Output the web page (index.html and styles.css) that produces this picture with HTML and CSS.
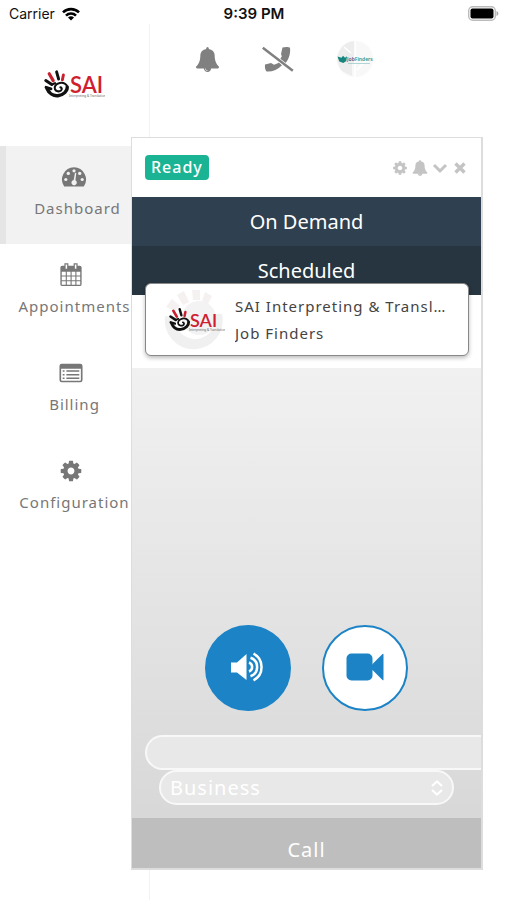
FILE: index.html
```html
<!DOCTYPE html>
<html lang="en">
<head>
<meta charset="utf-8">
<meta name="viewport" content="width=device-width, initial-scale=1">
<title>SAI Dashboard</title>
<link rel="stylesheet" href="styles.css">
</head>
<body>
<svg class="defs" aria-hidden="true">
  <symbol id="bell" viewBox="0 0 1792 1792"><path d="M912 1696q0-16-16-16-59 0-101.500-42.500t-42.500-101.500q0-16-16-16t-16 16q0 73 51.500 124.500t124.500 51.500q16 0 16-16zm816-288q0 52-38 90t-90 38h-448q0 106-75 181t-181 75-181-75-75-181h-448q-52 0-90-38t-38-90q50-42 91-88t85-119.500 74.500-158.500 50-206 19.500-260q0-152 117-282.500t307-158.500q-8-19-8-39 0-40 28-68t68-28 68 28 28 68q0 20-8 39 190 28 307 158.500t117 282.500q0 139 19.500 260t50 206 74.500 158.500 85 119.500 91 88z"/></symbol>
  <symbol id="cog" viewBox="0 0 1792 1792"><path d="M1152 896q0-106-75-181t-181-75-181 75-75 181 75 181 181 75 181-75 75-181zm512-109v222q0 12-8 23t-20 13l-185 28q-19 54-39 91 35 50 107 138 10 12 10 25t-9 23q-27 37-99 108t-94 71q-12 0-26-9l-138-108q-44 23-91 38-16 136-29 186-7 28-36 28h-222q-14 0-24.500-8.500t-11.500-21.500l-28-184q-49-16-90-37l-141 107q-10 9-25 9-14 0-25-11-126-114-165-168-7-10-7-23 0-12 8-23 15-21 51-66.500t54-70.500q-27-50-41-99l-183-27q-13-2-21-12.500t-8-23.500v-222q0-12 8-23t19-13l186-28q14-46 39-92-40-57-107-138-10-12-10-24 0-10 9-23 26-36 98.500-107.500t94.500-71.500q13 0 26 10l138 107q44-23 91-38 16-136 29-186 7-28 36-28h222q14 0 24.500 8.500t11.500 21.500l28 184q49 16 90 37l142-107q9-9 24-9 13 0 25 10 129 119 165 170 7 8 7 22 0 12-8 23-15 21-51 66.500t-54 70.500q26 50 41 98l183 28q13 2 21 12.500t8 23.500z"/></symbol>
  <symbol id="hand" viewBox="0 0 26 28">
    <g fill="none" stroke-linecap="round">
      <path d="M1.800 10.500l6 4" stroke="#111" stroke-width="3"/>
      <path d="M5.200 3.800l4 6.800" stroke="#c8202f" stroke-width="3.200"/>
      <path d="M12.600 1.800l2 7.200" stroke="#111" stroke-width="2.900"/>
      <path d="M19.400 5l-1 4.800" stroke="#c8202f" stroke-width="2.900"/>
      <path d="M2 17.300l5 1.500" stroke="#111" stroke-width="2.800"/>
      <path d="M3 18.500c2 5 6.500 7.700 11 7.200 5.500-.6 9.500-4.700 9.200-8.700" stroke="#111" stroke-width="3.400"/>
      <path d="M23.200 17c-.3-3-3.700-4.800-7.400-4-4 .9-5.800 3.500-4.800 6.200 1 2.200 4 2.800 6 1.300 1.300-1.200.8-3-.6-3.100" stroke="#111" stroke-width="2.100"/>
      <path d="M8 14.500l3-1.300" stroke="#111" stroke-width="2.200"/>
    </g>
  </symbol>
</svg>

<header class="status">
  <div class="carrier">Carrier
    <svg class="wifi" viewBox="0 0 18 14" aria-hidden="true"><g fill="none" stroke="#000" stroke-width="2.600"><path d="M1 5.400a11.300 11.300 0 0 1 16 0M4 8.600a7 7 0 0 1 10 0"/></g><path d="M9 13.500L6 10.600a4.300 4.300 0 0 1 6 0z"/></svg>
  </div>
  <div class="clock">9:39 PM</div>
  <svg class="battery" viewBox="0 0 31 15" aria-hidden="true"><rect x=".7" y=".7" width="26.600" height="13.600" rx="4" fill="#fff" stroke="#bbb" stroke-width="1.400"/><rect x="2.500" y="2.500" width="23" height="10" rx="2"/><path d="M28.500 5c2.500.8 2.500 4.200 0 5z" fill="#aaa"/></svg>
</header>

<div class="app">
  <aside class="sidebar">
    <a class="brand" href="#" aria-label="SAI">
      <svg viewBox="0 0 61 29"><use href="#hand" width="26" height="28"/><text x="26" y="23" class="logo-word">SAI</text><text x="25" y="27" class="logo-tag">Interpreting &amp; Translation</text></svg>
    </a>
    <nav>
      <a class="nav-item active" href="#">
        <svg viewBox="0 0 26 26" aria-hidden="true"><path d="M3.200 22.500A12.300 12.300 0 0 1 13 3.200a12.300 12.300 0 0 1 9.800 19.300z"/><g fill="#f2f2f2"><circle cx="4.800" cy="15.500" r="1.600"/><circle cx="7.300" cy="9.400" r="1.700"/><circle cx="13" cy="6.800" r="1.600"/><circle cx="18.700" cy="9.400" r="1.700"/><circle cx="21.200" cy="15.500" r="1.600"/><path d="M14 8.800l1.300.3-.9 7.200a2.700 2.700 0 1 1-1.700-.3z"/></g></svg>
        <span>Dashboard</span>
      </a>
      <a class="nav-item" href="#">
        <svg viewBox="0 0 26 26" aria-hidden="true"><path d="M3.500 3h19a2 2 0 0 1 2 2v18a2 2 0 0 1-2 2h-19a2 2 0 0 1-2-2V5a2 2 0 0 1 2-2z"/><path d="M6.500 1h3v6h-3zM16.500 1h3v6h-3z" fill="#fff" stroke="#777" stroke-width="1.300"/><path d="M3 9.500h4.300v4H3zM8.500 9.500h4v4h-4zM13.700 9.500h4v4h-4zM18.900 9.500H23v4h-4.100zM3 14.700h4.300v4H3zM8.500 14.700h4v4h-4zM13.700 14.700h4v4h-4zM18.900 14.700H23v4h-4.100zM3 19.900h4.300v3.600H3zM8.500 19.900h4v3.600h-4zM13.700 19.900h4v3.600h-4zM18.900 19.900H23v3.600h-4.100z" fill="#fff"/></svg>
        <span>Appointments</span>
      </a>
      <a class="nav-item" href="#">
        <svg viewBox="0 0 26 26" aria-hidden="true"><rect x=".5" y="3" width="25" height="20" rx="2.500"/><path d="M2.300 8.500h21.400v12a.8.800 0 0 1-.8.800H3.100a.8.800 0 0 1-.8-.8z" fill="#fff"/><path d="M4 10h2v1.600H4zM4 14h2v1.600H4zM4 18h2v1.600H4zM8 10h14v1.600H8zM8 14h14v1.600H8zM8 18h14v1.600H8z"/></svg>
        <span>Billing</span>
      </a>
      <a class="nav-item" href="#">
        <svg aria-hidden="true"><use href="#cog"/></svg>
        <span>Configuration</span>
      </a>
    </nav>
  </aside>

  <main class="main">
    <div class="toolbar">
      <button type="button" aria-label="Notifications"><svg class="tool-bell"><use href="#bell"/></svg></button>
      <button type="button" aria-label="Calls off">
        <svg class="tool-phone" viewBox="0 0 32 26"><path d="M20.500 1.500c2-.8 6-.9 7.500.1.800 7-1.500 13-6.500 18l-5-4.700c1.500-1.500 2.400-2.800 3.300-4.600l-.8-2.200zM3 18.500l6-1.500 3 1.700c2-.5 3.300-.9 5-2.400l3 3C15.500 24 10 26 4.500 25.500 3 24 2.700 20.500 3 18.500z"/><path d="M.8 1.800l30 23" stroke="#fff" stroke-width="4"/><path d="M.8 1.800l30 23" stroke="#808080" stroke-width="2.500"/></svg>
      </button>
      <button type="button" aria-label="Job Finders account">
        <svg class="avatar" viewBox="0 0 38 38"><circle cx="19" cy="19" r="18" fill="#f8f8f8"/><path d="M19 1A18 18 0 0 0 6 31l10 5V23h3z" fill="#ededed"/><path d="M19 1v36M8 7l7 6M21 30l9-10" stroke="#fff" stroke-width="1.500"/><path d="M1.500 16.500l4 1.300 1.500-2 2 2 2-1.500-.7 4.700-3 2-4-1.500z" fill="#16857b"/><text x="11" y="21" class="avatar-text">Job<tspan fill="#1d988e">Finders</tspan></text><path d="M12 23.500h22" stroke="#9ccdc8" stroke-width=".8"/></svg>
      </button>
    </div>
  </main>
</div>

<section class="widget" aria-label="Call">
  <div class="widget-head">
    <span class="badge">Ready</span>
    <div class="controls">
      <button type="button" aria-label="Settings"><svg><use href="#cog"/></svg></button>
      <button type="button" aria-label="Alerts"><svg><use href="#bell"/></svg></button>
      <button type="button" aria-label="Collapse"><svg viewBox="0 0 16 16"><path d="M2 5l6 6 6-6" fill="none" stroke="#c4c4c4" stroke-width="3"/></svg></button>
      <button type="button" aria-label="Close"><svg viewBox="0 0 16 16"><path d="M3.500 3.500l9 9M12.500 3.500l-9 9" stroke="#c4c4c4" stroke-width="3.400"/></svg></button>
    </div>
  </div>
  <button type="button" class="tab demand">On Demand</button>
  <button type="button" class="tab scheduled">Scheduled</button>
  <div class="card-zone">
    <article class="card">
      <svg class="card-logo" viewBox="0 0 62 62" aria-hidden="true">
        <path d="M2 27a29 29 0 1 0 57-2l-7 0c3 13-7 24-19 25-13 0-21-10-22-22z" fill="#f0f0f0"/>
        <circle cx="36" cy="29" r="17" fill="#f3f3f3"/>
        <path d="M14 6l7-4 5 11-6 3zM29 1h8v10h-7zM42 3l7 4-4 8-6-3zM3 18l6-8 8 7-5 5z" fill="#f5f1f1"/>
        <use href="#hand" x="6" y="18" width="22" height="25"/><text x="27" y="38" class="logo-word small">SAI</text><text x="26" y="42" class="logo-tag">Interpreting &amp; Translation</text>
      </svg>
      <div class="card-text"><p>SAI Interpreting &amp; Translation</p><p>Job Finders</p></div>
    </article>
  </div>
  <form class="call-form">
    <div class="modes">
      <button type="button" class="mode audio" aria-label="Audio call"><svg viewBox="0 0 38 38"><path d="M2 13.500h6L17.500 5v26L8 23.500H2z" fill="#fff"/><g fill="none" stroke="#fff" stroke-width="2.500"><path d="M20 13.500a4.800 4.800 0 0 1 0 9M21.500 8.800a9.700 9.700 0 0 1 0 18.400M24.500 4.700a15 15 0 0 1 0 26.600"/></g></svg></button>
      <button type="button" class="mode video" aria-label="Video call"><svg viewBox="0 0 38 38"><rect x=".5" y="4.500" width="26" height="27" rx="5" fill="#1c84c6"/><path d="M26 15.500L36.500 5q1-.7 1 .6v24.800q0 1.300-1 .6L26 20.500z" fill="#1c84c6"/></svg></button>
    </div>
    <input class="field" type="text" aria-label="Details">
    <div class="select-wrap">
      <select aria-label="Call type"><option>Business</option><option>Personal</option></select>
      <svg viewBox="0 0 14 16" aria-hidden="true"><path d="M2 6l5-4.500L12 6M2 10l5 4.500L12 10" fill="none" stroke="#fff" stroke-width="2.200"/></svg>
    </div>
    <button type="submit" class="call">Call</button>
  </form>
</section>
</body>
</html>
```
FILE: styles.css
```css
* { box-sizing: border-box; }

body {
  margin: 0;
  min-height: 100vh;
  display: flex;
  flex-direction: column;
  position: relative;
  background: #fff;
  color: #777;
  font-family: "Noto Sans", "Open Sans", sans-serif;
  font-size: 14px;
}

button {
  padding: 0;
  border: 0;
  background: none;
  color: inherit;
  font: inherit;
  cursor: pointer;
}

svg { display: block; }
.defs { position: absolute; width: 0; height: 0; }

.status {
  display: grid;
  grid-template-columns: 1fr auto 1fr;
  align-items: center;
  height: 24px;
  padding: 3px 8px 0 9px;
  color: #111;
  font-family: Inter, sans-serif;
}
.carrier { display: flex; align-items: center; gap: 7px; }
.wifi { width: 18px; height: 14px; }
.clock { font-size: 15px; font-weight: 600; }
.battery { width: 31px; height: 15px; justify-self: end; }

.app { flex: 1; display: flex; }

.sidebar {
  width: 150px;
  flex: none;
  border-right: 1px solid #f3f3f3;
}
.brand {
  display: flex;
  justify-content: center;
  height: 122px;
  padding-top: 46px;
}
.brand svg { width: 61px; height: 29px; }
.logo-word { font: 600 22px Lato, sans-serif; fill: #cf2030; }
.logo-word.small { font-size: 18px; }
.logo-tag { font: 3px "Noto Sans", sans-serif; fill: #666; }

.nav-item {
  display: flex;
  flex-direction: column;
  gap: 8px;
  height: 98px;
  padding-top: 18px;
  color: #777;
  letter-spacing: 1px;
  line-height: 20px;
  font-size: 15px;
  text-align: center;
  text-decoration: none;
}
.nav-item svg {
  width: 24px;
  height: 26px;
  margin-left: 59px;
  fill: #777;
}
.nav-item.active {
  border-left: 6px solid #e5e5e5;
  background: #f2f2f2;
}
.nav-item.active svg { width: 26px; margin-left: 55px; }

.main { flex: 1; }
.toolbar {
  display: flex;
  align-items: center;
  gap: 42px;
  padding: 16px 45px;
}
.toolbar svg { fill: #808080; }
.tool-bell { width: 25px; height: 25px; }
.tool-phone { width: 32px; height: 26px; }
.avatar { width: 38px; height: 38px; }
.avatar-text { font: 600 5px "Noto Sans", sans-serif; fill: #557; }

/* Floating call panel over the page */
.widget {
  position: absolute;
  top: 137px;
  left: 131px;
  right: 24px;
  display: flex;
  flex-direction: column;
  overflow: hidden;
  border: 1px solid #ddd;
  border-right-width: 2px;
  border-bottom-width: 2px;
  background: #fff;
}
.widget-head {
  display: flex;
  align-items: center;
  justify-content: space-between;
  height: 59px;
  padding: 0 13px;
}
.badge {
  padding: 0 6px;
  border-radius: 4px;
  background: #1ab394;
  color: #fff;
  font-size: 16px;
  font-weight: 500;
  line-height: 25px;
  letter-spacing: 1px;
}
.controls { display: flex; gap: 4px; }
.controls svg { width: 16px; height: 16px; fill: #c4c4c4; }

.tab {
  height: 49px;
  color: #fff;
  font-size: 20px;
}
.demand { background: #2f4050; }
.scheduled { background: #263540; }

.card-zone { padding: 0 12px 12px 13px; }
.card {
  position: relative;
  display: flex;
  align-items: center;
  gap: 10px;
  height: 73px;
  margin-top: -12px;
  padding: 0 18px 0 17px;
  border: 1px solid #888;
  border-radius: 6px;
  background: #fff;
  box-shadow: 0 2px 4px #0004;
}
.card-logo { width: 62px; height: 62px; flex: none; }
.card-text { flex: 1; min-width: 0; }
.card p {
  margin: 0;
  overflow: hidden;
  color: #444;
  font-size: 15px;
  line-height: 27px;
  letter-spacing: 1px;
  white-space: nowrap;
  text-overflow: ellipsis;
}

.call-form {
  display: flex;
  flex-direction: column;
  padding-top: 257px;
  background: linear-gradient(#f1f1f1, #d5d5d5);
}
.modes { display: flex; justify-content: center; gap: 31px; margin-bottom: 24px; }
.mode {
  display: flex;
  align-items: center;
  justify-content: center;
  width: 86px;
  height: 86px;
  border: 2px solid #1c84c6;
  border-radius: 50%;
}
.mode svg { width: 38px; height: 38px; }
.audio { background: #1c84c6; }
.video { background: #fff; }

.field, .select-wrap select {
  height: 35px;
  border: 2px solid #f8f8f8;
  border-radius: 18px;
  background: #e8e8e8;
  color: #fff;
  font: 20px "Noto Sans", sans-serif;
  letter-spacing: 1px;
}
.field {
  margin-left: 13px;
  border-right: 0;
  border-radius: 18px 0 0 18px;
}
.select-wrap { position: relative; margin: 0 27px 13px; }
.select-wrap select {
  display: block;
  appearance: none;
  width: 100%;
  padding: 0 30px 0 9px;
}
.select-wrap svg {
  position: absolute;
  top: 10px;
  right: 10px;
  width: 14px;
  height: 16px;
  pointer-events: none;
}
.call {
  height: 50px;
  padding-top: 13px;
  background: #bebebe;
  color: #fff;
  font-size: 20px;
  letter-spacing: 1px;
}
```
